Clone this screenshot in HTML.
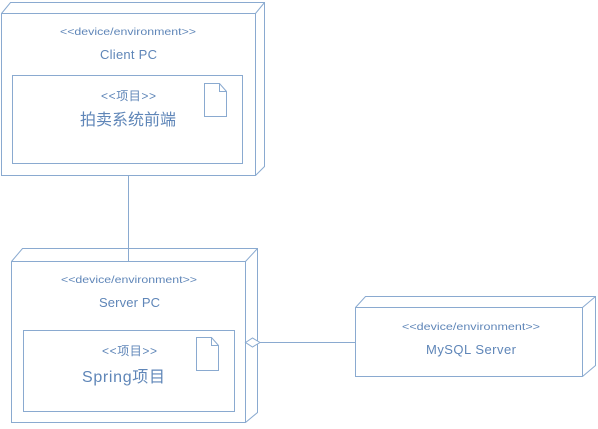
<!DOCTYPE html>
<html><head><meta charset="utf-8"><style>
body{margin:0;background:#fff;width:598px;height:424px;overflow:hidden}
svg text{font-family:"Liberation Sans","Noto Sans CJK SC",sans-serif;fill:#5f86b8}
</style></head><body>
<svg width="598" height="424" viewBox="0 0 598 424" xmlns="http://www.w3.org/2000/svg">
<g fill="none" stroke="#8aaad0" stroke-width="1">
<polygon points="1.5,13.5 10.5,2.5 264.5,2.5 264.5,166.5 255.5,175.5 1.5,175.5"/>
<polyline points="1.5,13.5 255.5,13.5 264.5,2.5"/>
<line x1="255.5" y1="13.5" x2="255.5" y2="175.5"/>
<rect x="12.5" y="75.5" width="230" height="88"/>
<path d="M204.5,83.5 H219.5 L226.5,91.5 V116.5 H204.5 Z M219.5,83.5 V91.5 H226.5"/>
<line x1="128.5" y1="175.5" x2="128.5" y2="261"/>
<polygon points="11.5,261.5 22.5,248.5 257.5,248.5 257.5,412.5 245.5,422.5 11.5,422.5"/>
<polyline points="11.5,261.5 245.5,261.5 257.5,248.5"/>
<line x1="245.5" y1="261.5" x2="245.5" y2="422.5"/>
<rect x="23.5" y="330.5" width="211" height="81"/>
<path d="M196.5,337.5 H211.5 L218.5,345.5 V370.5 H196.5 Z M211.5,337.5 V345.5 H218.5"/>
<polygon points="245.5,342.5 252.5,338 260,342.5 252.5,347" fill="#fff"/>
<line x1="260" y1="342.5" x2="355.5" y2="342.5"/>
<polygon points="355.5,307.5 365.5,296.5 595.5,296.5 595.5,365.5 582.5,376.5 355.5,376.5"/>
<polyline points="355.5,307.5 582.5,307.5 595.5,296.5"/>
<line x1="582.5" y1="307.5" x2="582.5" y2="376.5"/>
</g>
<g>
<text x="60" y="35" font-size="10.5" textLength="136" lengthAdjust="spacingAndGlyphs">&lt;&lt;device/environment&gt;&gt;</text>
<text x="100" y="59" font-size="13" textLength="57">Client PC</text>
<text x="101" y="100" font-size="12" textLength="55">&lt;&lt;项目&gt;&gt;</text>
<text x="80" y="125" font-size="16" textLength="96">拍卖系统前端</text>
<text x="61" y="283" font-size="10.5" textLength="136" lengthAdjust="spacingAndGlyphs">&lt;&lt;device/environment&gt;&gt;</text>
<text x="99" y="307" font-size="13" textLength="61">Server PC</text>
<text x="102" y="355" font-size="12" textLength="55">&lt;&lt;项目&gt;&gt;</text>
<text x="82" y="382" font-size="16" textLength="83">Spring项目</text>
<text x="402" y="330" font-size="10.5" textLength="138" lengthAdjust="spacingAndGlyphs">&lt;&lt;device/environment&gt;&gt;</text>
<text x="426" y="354" font-size="13" textLength="90">MySQL Server</text>
</g>
</svg>
</body></html>
